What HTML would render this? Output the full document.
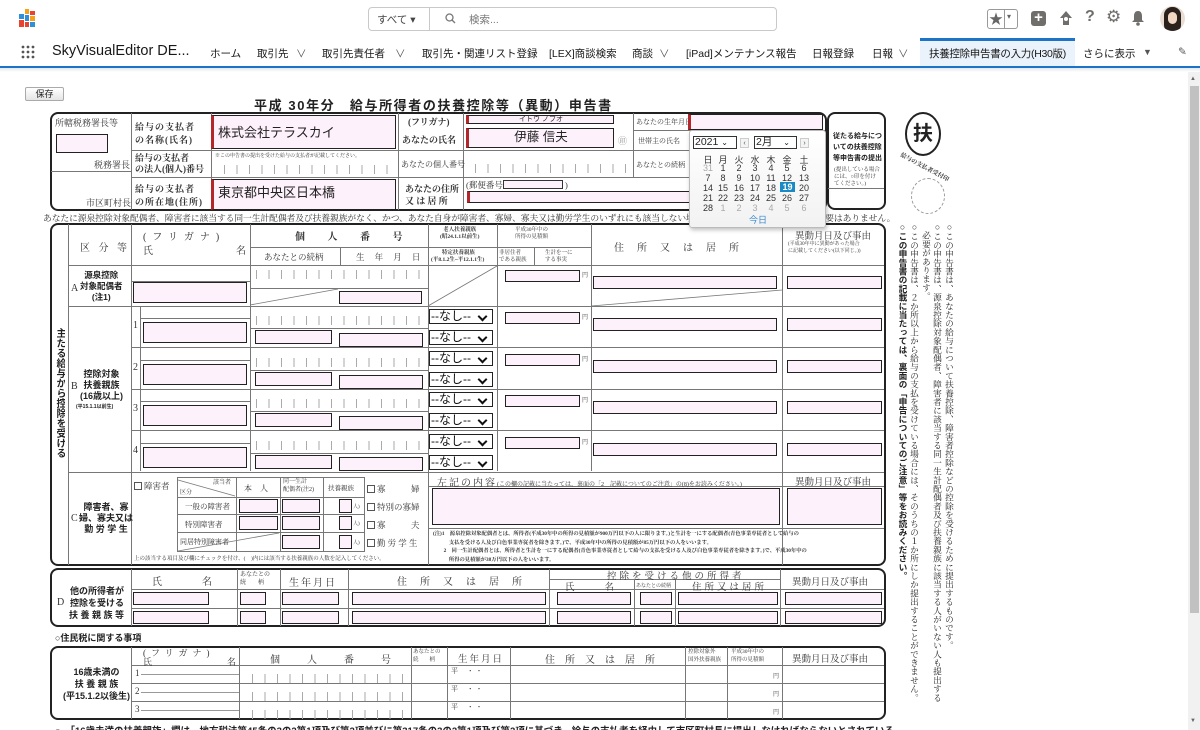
<!DOCTYPE html>
<html><head><meta charset="utf-8">
<style>
*{box-sizing:border-box}
html{overflow:hidden;height:730px}
body{margin:0;width:1200px;height:730px;overflow:hidden;position:relative;background:#fff;font-family:"Liberation Sans","Noto Sans CJK JP",sans-serif;color:#222}
.a{position:absolute;white-space:nowrap}
.h{position:absolute;height:0;border-top:1px solid #777}
.v{position:absolute;width:0;border-left:1px solid #777}
.i{position:absolute;background:#fdf1fb;border:1px solid #222}
.r{border-left:3px solid #b3262a}
.box{position:absolute;border:2px solid #222;border-radius:8px}
.m{position:absolute;white-space:nowrap;font-family:"Liberation Serif","Noto Serif CJK SC",serif;font-size:9px;color:#333}
.bd{position:absolute;white-space:nowrap;font-family:"Liberation Sans","Noto Sans CJK JP",sans-serif;font-size:9px;font-weight:bold;color:#222}
.tk{position:absolute;height:9px;background:repeating-linear-gradient(90deg,#aaa 0 1px,transparent 1px 12.5px)}
.s{position:absolute;width:64px;height:15px;border:1px solid #222;background:#fff;font-size:12px;line-height:13px;padding-left:1px;color:#111}
.s:after{content:"";position:absolute;right:6px;top:3px;width:5px;height:5px;border-right:2px solid #111;border-bottom:2px solid #111;transform:rotate(45deg)}
.vt{position:absolute;writing-mode:vertical-rl;font-family:"Liberation Serif","Noto Serif CJK SC",serif;font-size:8.7px;line-height:11.5px;white-space:nowrap;color:#222;overflow:hidden;max-height:500px}
.nv{position:absolute;top:46px;font-size:10.5px;color:#181818;white-space:nowrap}
.cb{display:inline-block;width:8px;height:8px;border:1px solid #555;vertical-align:-1px;margin-right:2px}
.cd{position:absolute;font-size:9px;width:14px;text-align:center;color:#333}
</style></head><body>

<!-- top header -->
<svg class="a" style="left:18px;top:9px" width="19" height="19" viewBox="0 0 19 19">
<rect x="7" y="0" width="4" height="5" fill="#f4a21c"/><rect x="12" y="2" width="5" height="4" fill="#e8432f"/>
<rect x="1" y="5" width="5" height="5" fill="#2f8fd8"/><rect x="7" y="6" width="4" height="6" fill="#2f8fd8"/>
<rect x="12" y="7" width="5" height="5" fill="#f4a21c"/><rect x="1" y="11" width="5" height="7" fill="#e8432f"/>
<rect x="7" y="13" width="4" height="5" fill="#e8432f"/><rect x="12" y="13" width="5" height="5" fill="#2f8fd8"/>
</svg>
<div class="a" style="left:368px;top:7px;width:409px;height:24px;border:1px solid #c9c9c9;border-radius:4px"></div>
<div class="v" style="left:429px;top:7px;height:24px;border-color:#c9c9c9"></div>
<div class="a" style="left:377px;top:12px;font-size:10.5px;color:#444">すべて ▾</div>
<svg class="a" style="left:445px;top:13px" width="11" height="11" viewBox="0 0 11 11"><circle cx="4.5" cy="4.5" r="3.5" stroke="#777" stroke-width="1.3" fill="none"/><path d="M7 7l3 3" stroke="#777" stroke-width="1.3"/></svg>
<div class="a" style="left:469px;top:12px;font-size:10.5px;color:#777">検索...</div>
<div class="a" style="left:987px;top:9px;width:31px;height:20px;border:1px solid #999;border-radius:3px"></div>
<div class="v" style="left:1004px;top:9px;height:20px;border-color:#999"></div>
<div class="a" style="left:989px;top:9px;font-size:14px;color:#666">★</div>
<div class="a" style="left:1007px;top:12px;font-size:8px;color:#666">▾</div>
<div class="a" style="left:1031px;top:11px;width:15px;height:15px;background:#706e6b;border-radius:3px;color:#fff;font-size:15px;line-height:14px;text-align:center;font-weight:bold">+</div>
<svg class="a" style="left:1057px;top:10px" width="18" height="17" viewBox="0 0 18 17"><path d="M9 1L3 8h3v7h6V8h3z" fill="#706e6b"/><circle cx="9" cy="9" r="2" fill="#fff"/></svg>
<div class="a" style="left:1085px;top:8px;font-size:16px;color:#706e6b;font-weight:bold">?</div>
<div class="a" style="left:1106px;top:7px;font-size:17px;color:#706e6b">⚙</div>
<svg class="a" style="left:1131px;top:10px" width="14" height="16" viewBox="0 0 14 16"><path d="M7 1C4 1 3 3.5 3 6v4l-2 2h12l-2-2V6c0-2.5-1-5-4-5z" fill="#706e6b"/><circle cx="7" cy="14" r="1.8" fill="#706e6b"/></svg>
<div class="a" style="left:1160px;top:6px;width:25px;height:25px;border-radius:50%;background:#e9dcd2;overflow:hidden"><div class="a" style="left:4px;top:1px;width:17px;height:26px;border-radius:8px;background:#2a211d"></div><div class="a" style="left:8px;top:6px;width:9px;height:12px;border-radius:5px;background:#f1d6c4"></div></div>

<!-- nav -->
<svg class="a" style="left:21px;top:45px" width="14" height="14" viewBox="0 0 14 14" fill="#555"><circle cx="2" cy="2" r="1.4"/><circle cx="7" cy="2" r="1.4"/><circle cx="12" cy="2" r="1.4"/><circle cx="2" cy="7" r="1.4"/><circle cx="7" cy="7" r="1.4"/><circle cx="12" cy="7" r="1.4"/><circle cx="2" cy="12" r="1.4"/><circle cx="7" cy="12" r="1.4"/><circle cx="12" cy="12" r="1.4"/></svg>
<div class="a" style="left:52px;top:43px;font-size:14.5px;color:#181818">SkyVisualEditor DE...</div>
<div class="a" style="left:920px;top:38px;width:155px;height:28px;background:#eaf2fb;border-top:3px solid #1b74c8"></div>
<div class="nv" style="left:210px">ホーム</div>
<div class="nv" style="left:257px">取引先</div><div class="nv" style="left:296px;color:#555">∨</div>
<div class="nv" style="left:322px">取引先責任者</div><div class="nv" style="left:395px;color:#555">∨</div>
<div class="nv" style="left:422px">取引先・関連リスト登録</div>
<div class="nv" style="left:549px">[LEX]商談検索</div>
<div class="nv" style="left:632px">商談</div><div class="nv" style="left:659px;color:#555">∨</div>
<div class="nv" style="left:686px">[iPad]メンテナンス報告</div>
<div class="nv" style="left:812px">日報登録</div>
<div class="nv" style="left:872px">日報</div><div class="nv" style="left:898px;color:#555">∨</div>
<div class="nv" style="left:929px;letter-spacing:-0.3px">扶養控除申告書の入力(H30版)</div>
<div class="nv" style="left:1083px">さらに表示</div><div class="nv" style="left:1143px;font-size:9px;top:47px;color:#555">▼</div>
<div class="nv" style="left:1178px;color:#555">✎</div>
<div class="a" style="left:0;top:66px;width:1200px;height:2px;background:#1b74c8"></div>
<div class="a" style="left:0;top:68px;width:1200px;height:4px;background:linear-gradient(#e4e8ee,#fff)"></div>

<!-- scrollbar -->
<div class="a" style="left:1188px;top:72px;width:12px;height:658px;background:#f1f1f1"></div>
<div class="a" style="left:1190px;top:86px;width:9px;height:527px;background:#c1c1c1"></div>
<div class="a" style="left:1190px;top:76px;font-size:6px;color:#666">▲</div>
<div class="a" style="left:1190px;top:718px;font-size:6px;color:#666">▼</div>

<!-- save button and title -->
<div class="a" style="left:25px;top:87px;width:39px;height:14px;border:1px solid #aaa;border-radius:2px;background:linear-gradient(#fff,#e5e5e5);font-size:9px;line-height:12px;text-align:center">保存</div>
<div class="a" style="left:254px;top:95px;font-size:13px;font-weight:bold;letter-spacing:1.6px">平成 30年分　給与所得者の扶養控除等（異動）申告書</div>

<!-- top box -->
<div class="box" style="left:50px;top:112px;width:777px;height:99px"></div>
<div class="v" style="left:131px;top:113px;height:97px"></div>
<div class="v" style="left:211px;top:113px;height:97px"></div>
<div class="v" style="left:398px;top:113px;height:97px"></div>
<div class="v" style="left:463px;top:113px;height:97px"></div>
<div class="v" style="left:633px;top:113px;height:64px"></div>
<div class="h" style="left:51px;top:171px;width:80px"></div>
<div class="h" style="left:131px;top:150px;width:694px"></div>
<div class="h" style="left:131px;top:177px;width:694px"></div>
<div class="h" style="left:633px;top:130px;width:192px"></div>
<div class="m" style="left:55px;top:116px">所轄税務署長等</div>
<div class="i" style="left:56px;top:134px;width:52px;height:19px"></div>
<div class="m" style="left:94px;top:158px">税務署長</div>
<div class="m" style="left:86px;top:196px">市区町村長</div>
<div class="m" style="left:135px;top:120px;font-weight:bold;letter-spacing:1px">給与の支払者<br>の名称(氏名)</div>
<div class="m" style="left:135px;top:153px;font-weight:bold;line-height:11px">給与の支払者<br>の法人(個人)番号</div>
<div class="m" style="left:135px;top:182px;font-weight:bold;letter-spacing:1px">給与の支払者<br>の所在地(住所)</div>
<div class="i r" style="left:211px;top:115px;width:185px;height:34px;font-size:13px;padding:6px 0 0 4px;font-family:'Liberation Sans','Noto Sans CJK JP',sans-serif">株式会社テラスカイ</div>
<div class="m" style="left:215px;top:152px;font-size:5px">※この申告書の提出を受けた給与の支払者が記載してください。</div>
<div class="tk" style="left:224px;top:165px;width:170px"></div>
<div class="i r" style="left:211px;top:179px;width:185px;height:31px;font-size:13px;padding:2px 0 0 4px;font-family:'Liberation Sans','Noto Sans CJK JP',sans-serif">東京都中央区日本橋</div>
<div class="m" style="left:408px;top:115px;font-weight:bold">(フリガナ)</div>
<div class="m" style="left:402px;top:133px;font-weight:bold">あなたの氏名</div>
<div class="m" style="left:401px;top:159px;font-size:8px">あなたの個人番号</div>
<div class="m" style="left:405px;top:183px;font-weight:bold;line-height:12px">あなたの住所<br>又 は 居 所</div>
<div class="i r" style="left:466px;top:115px;width:148px;height:9px;font-size:7px;line-height:7px;text-align:center">イトウ ノブオ</div>
<div class="i r" style="left:466px;top:128px;width:148px;height:20px;font-size:12.5px;text-align:center;line-height:17px">伊藤 信夫</div>
<div class="m" style="left:618px;top:134px;color:#999">㊞</div>
<div class="tk" style="left:475px;top:164px;width:155px"></div>
<div class="m" style="left:466px;top:179px;font-size:8.5px">(郵便番号<span style="display:inline-block;width:60px;height:9px;border:1px solid #333;background:#fdf1fb;vertical-align:-1px"></span> )</div>
<div class="i r" style="left:467px;top:191px;width:300px;height:12px"></div>
<div class="m" style="left:636px;top:117px;font-size:7px">あなたの生年月日</div>
<div class="m" style="left:638px;top:136px;font-size:7px">世帯主の氏名</div>
<div class="m" style="left:636px;top:160px;font-size:7px">あなたとの続柄</div>

<!-- side box -->
<div class="box" style="left:827px;top:112px;width:59px;height:98px"></div>
<div class="bd" style="left:833px;top:131px;font-size:7px;line-height:11px">従たる給与につ<br>いての扶養控除<br>等申告書の提出</div>
<div class="m" style="left:834px;top:167px;font-size:5.5px;line-height:7px">(提出している場合<br>には、○印を付け<br>てください。)</div>
<div class="h" style="left:828px;top:188px;width:56px"></div>

<!-- 扶 seal -->
<div class="a" style="left:905px;top:112px;width:36px;height:44px;border:2px solid #222;border-radius:50%;font-size:20px;font-weight:bold;text-align:center;line-height:40px">扶</div>
<div class="a" style="left:911px;top:178px;width:34px;height:36px;border:1px dashed #999;border-radius:50%"></div>
<div class="m" style="left:898px;top:162px;font-size:6px;font-weight:bold;transform:rotate(28deg)">給与の支払者受付印</div>

<!-- line text -->
<div class="m" style="left:43px;top:211px;font-size:8.8px;letter-spacing:-0.1px">あなたに源泉控除対象配偶者、障害者に該当する同一生計配偶者及び扶養親族がなく、かつ、あなた自身が障害者、寡婦、寡夫又は勤労学生のいずれにも該当しない場合には、以下の各欄に記入する必要はありません。</div>

<!-- main box -->
<div class="box" style="left:50px;top:223px;width:836px;height:343px"></div>
<div class="v" style="left:68px;top:224px;height:341px"></div>
<div class="v" style="left:131px;top:224px;height:341px"></div>
<div class="v" style="left:250px;top:224px;height:247px"></div>
<div class="v" style="left:428px;top:224px;height:341px"></div>
<div class="v" style="left:497px;top:224px;height:247px"></div>
<div class="v" style="left:591px;top:224px;height:247px"></div>
<div class="v" style="left:782px;top:224px;height:341px"></div>
<div class="v" style="left:340px;top:247px;height:18px"></div>
<div class="v" style="left:534px;top:247px;height:18px"></div>
<div class="v" style="left:140px;top:306px;height:165px"></div>
<div class="h" style="left:250px;top:247px;width:341px"></div>
<div class="h" style="left:68px;top:265px;width:816px"></div>
<div class="h" style="left:68px;top:306px;width:816px"></div>
<div class="h" style="left:131px;top:347px;width:753px"></div>
<div class="h" style="left:131px;top:389px;width:753px"></div>
<div class="h" style="left:131px;top:430px;width:753px"></div>
<div class="h" style="left:68px;top:472px;width:816px"></div>
<div class="h" style="left:428px;top:486px;width:456px"></div>
<div class="h" style="left:428px;top:528px;width:456px"></div>

<div class="m" style="left:80px;top:239px;font-size:10px;letter-spacing:3px">区 分 等</div>
<div class="m" style="left:143px;top:228px;font-size:10px;letter-spacing:6px">(フリガナ)</div>
<div class="m" style="left:143px;top:242px;font-size:10px">氏</div><div class="m" style="left:236px;top:242px;font-size:10px">名</div>
<div class="m" style="left:295px;top:228px;font-size:10px;font-weight:bold;letter-spacing:10px">個 人 番 号</div>
<div class="m" style="left:264px;top:251px;font-size:8.5px">あなたとの続柄</div>
<div class="m" style="left:356px;top:251px;font-size:8.5px;letter-spacing:4px">生 年 月 日</div>
<div class="m" style="left:440px;top:227px;font-size:5.5px;line-height:7px;text-align:center;font-weight:bold">老人扶養親族<br>(昭24.1.1以前生)</div>
<div class="m" style="left:431px;top:250px;font-size:5.5px;line-height:7px;text-align:center;font-weight:bold">&nbsp;特定扶養親族<br>(平8.1.2生~平12.1.1生)</div>
<div class="m" style="left:515px;top:227px;font-size:5.5px;line-height:7px;text-align:center">平成30年中の<br>所得の見積額</div>
<div class="m" style="left:499px;top:250px;font-size:5.5px;line-height:7px">非居住者<br>である親族</div>
<div class="m" style="left:545px;top:250px;font-size:5.5px;line-height:7px">生計を一に<br>する事実</div>
<div class="m" style="left:614px;top:239px;font-size:10px;letter-spacing:13px">住所又は居所</div>
<div class="m" style="left:795px;top:228px;font-size:9.5px">異動月日及び事由</div>
<div class="m" style="left:788px;top:241px;font-size:5px;line-height:7px">(平成30年中に異動があった場合<br>に記載してください(以下同じ。))</div>

<div class="vt" style="left:53px;top:328px;font-family:'Liberation Sans','Noto Sans CJK JP',sans-serif;font-weight:bold;font-size:10px;line-height:12px">主たる給与から控除を受ける</div>
<div class="m" style="left:71px;top:283px;font-size:10px">A</div>
<div class="bd" style="left:80px;top:270px;font-size:8.5px;line-height:11px;text-align:center">源泉控除<br>対象配偶者<br>(注1)</div>
<div class="m" style="left:71px;top:381px;font-size:10px">B</div>
<div class="bd" style="left:80px;top:369px;font-size:9px;line-height:11px;text-align:center">控除対象<br>扶養親族<br>(16歳以上)</div>
<div class="bd" style="left:76px;top:403px;font-size:5px">(平15.1.1以前生)</div>
<div class="m" style="left:71px;top:513px;font-size:10px">C</div>
<div class="bd" style="left:79px;top:502px;font-size:9px;line-height:11px;text-align:center">障害者、寡<br>婦、寡夫又は<br>勤 労 学 生</div>

<!-- A row -->
<div class="h" style="left:131px;top:281px;width:119px"></div>
<div class="i" style="left:133px;top:282px;width:114px;height:21px"></div>
<div class="tk" style="left:256px;top:270px;width:165px"></div>
<div class="h" style="left:250px;top:288px;width:178px"></div>
<div class="i" style="left:339px;top:291px;width:83px;height:13px"></div>
<div class="i" style="left:505px;top:270px;width:75px;height:12px"></div><div class="m" style="left:582px;top:270px;font-size:6px">円</div>
<div class="i" style="left:593px;top:276px;width:184px;height:13px"></div>
<div class="i" style="left:787px;top:276px;width:95px;height:13px"></div>

<!-- B rows -->
<div class="m" style="left:133px;top:320px;font-size:10px">1</div>
<div class="m" style="left:133px;top:362px;font-size:10px">2</div>
<div class="m" style="left:133px;top:403px;font-size:10px">3</div>
<div class="m" style="left:133px;top:445px;font-size:10px">4</div>

<div class="h" style="left:140px;top:318px;width:110px"></div>
<div class="i" style="left:143px;top:322px;width:104px;height:21px"></div>
<div class="tk" style="left:256px;top:316px;width:165px"></div>
<div class="h" style="left:250px;top:328px;width:178px"></div>
<div class="i" style="left:255px;top:330px;width:77px;height:14px"></div>
<div class="i" style="left:339px;top:333px;width:84px;height:14px"></div>
<div class="s" style="left:429px;top:309px">--なし--</div>
<div class="s" style="left:429px;top:330px">--なし--</div>
<div class="i" style="left:505px;top:312px;width:75px;height:12px"></div><div class="m" style="left:582px;top:312px;font-size:6px">円</div>
<div class="i" style="left:593px;top:318px;width:184px;height:13px"></div>
<div class="i" style="left:787px;top:318px;width:95px;height:13px"></div>

<div class="h" style="left:140px;top:360px;width:110px"></div>
<div class="i" style="left:143px;top:364px;width:104px;height:21px"></div>
<div class="tk" style="left:256px;top:358px;width:165px"></div>
<div class="h" style="left:250px;top:370px;width:178px"></div>
<div class="i" style="left:255px;top:372px;width:77px;height:14px"></div>
<div class="i" style="left:339px;top:375px;width:84px;height:14px"></div>
<div class="s" style="left:429px;top:351px">--なし--</div>
<div class="s" style="left:429px;top:372px">--なし--</div>
<div class="i" style="left:505px;top:354px;width:75px;height:12px"></div><div class="m" style="left:582px;top:354px;font-size:6px">円</div>
<div class="i" style="left:593px;top:360px;width:184px;height:13px"></div>
<div class="i" style="left:787px;top:360px;width:95px;height:13px"></div>

<div class="h" style="left:140px;top:401px;width:110px"></div>
<div class="i" style="left:143px;top:405px;width:104px;height:21px"></div>
<div class="tk" style="left:256px;top:399px;width:165px"></div>
<div class="h" style="left:250px;top:411px;width:178px"></div>
<div class="i" style="left:255px;top:413px;width:77px;height:14px"></div>
<div class="i" style="left:339px;top:416px;width:84px;height:14px"></div>
<div class="s" style="left:429px;top:392px">--なし--</div>
<div class="s" style="left:429px;top:413px">--なし--</div>
<div class="i" style="left:505px;top:395px;width:75px;height:12px"></div><div class="m" style="left:582px;top:395px;font-size:6px">円</div>
<div class="i" style="left:593px;top:401px;width:184px;height:13px"></div>
<div class="i" style="left:787px;top:401px;width:95px;height:13px"></div>

<div class="h" style="left:140px;top:443px;width:110px"></div>
<div class="i" style="left:143px;top:447px;width:104px;height:21px"></div>
<div class="tk" style="left:256px;top:441px;width:165px"></div>
<div class="h" style="left:250px;top:453px;width:178px"></div>
<div class="i" style="left:255px;top:455px;width:77px;height:14px"></div>
<div class="i" style="left:339px;top:457px;width:84px;height:14px"></div>
<div class="s" style="left:429px;top:434px">--なし--</div>
<div class="s" style="left:429px;top:455px">--なし--</div>
<div class="i" style="left:505px;top:437px;width:75px;height:12px"></div><div class="m" style="left:582px;top:437px;font-size:6px">円</div>
<div class="i" style="left:593px;top:443px;width:184px;height:13px"></div>
<div class="i" style="left:787px;top:443px;width:95px;height:13px"></div>

<svg class="a" style="left:0;top:0" width="1200" height="730">
<g stroke="#777" stroke-width="0.8">
<line x1="250" y1="305" x2="338" y2="289"/><line x1="428" y1="306" x2="497" y2="266"/><line x1="591" y1="306" x2="782" y2="290"/>
<line x1="178" y1="551" x2="279" y2="533"/>
<line x1="178" y1="480" x2="235" y2="496"/>
</g></svg>

<!-- C section -->
<div class="m" style="left:134px;top:480px;font-size:8.5px"><span class="cb"></span>障害者</div>
<div class="a" style="left:177px;top:477px;width:188px;height:75px;border:1px solid #777"></div>
<div class="v" style="left:236px;top:477px;height:75px"></div>
<div class="v" style="left:280px;top:477px;height:75px"></div>
<div class="v" style="left:323px;top:477px;height:75px"></div>
<div class="h" style="left:177px;top:497px;width:188px"></div>
<div class="h" style="left:177px;top:514px;width:188px"></div>
<div class="h" style="left:177px;top:532px;width:188px"></div>
<div class="m" style="left:213px;top:477px;font-size:6px">該当者</div><div class="m" style="left:180px;top:487px;font-size:6px">区分</div>
<div class="m" style="left:244px;top:483px;font-size:8px">本　人</div>
<div class="m" style="left:283px;top:478px;font-size:6px;line-height:8px">同一生計<br>配偶者(注2)</div>
<div class="m" style="left:328px;top:483px;font-size:6.5px">扶養親族</div>
<div class="m" style="left:185px;top:501px;font-size:7.5px">一般の障害者</div>
<div class="m" style="left:185px;top:519px;font-size:7.5px">特別障害者</div>
<div class="m" style="left:180px;top:537px;font-size:7px">同居特別障害者</div>
<div class="i" style="left:239px;top:499px;width:39px;height:14px"></div>
<div class="i" style="left:282px;top:499px;width:38px;height:14px"></div>
<div class="i" style="left:339px;top:499px;width:13px;height:14px"></div><div class="m" style="left:353px;top:503px;font-size:5px">人)</div>
<div class="i" style="left:239px;top:516px;width:39px;height:14px"></div>
<div class="i" style="left:282px;top:516px;width:38px;height:14px"></div>
<div class="i" style="left:339px;top:516px;width:13px;height:14px"></div><div class="m" style="left:353px;top:520px;font-size:5px">人)</div>
<div class="i" style="left:282px;top:535px;width:38px;height:14px"></div>
<div class="i" style="left:339px;top:535px;width:13px;height:14px"></div><div class="m" style="left:353px;top:539px;font-size:5px">人)</div>
<div class="m" style="left:367px;top:483px;font-size:8.5px"><span class="cb"></span>寡　　　婦</div>
<div class="m" style="left:367px;top:501px;font-size:8.5px"><span class="cb"></span>特別の寡婦</div>
<div class="m" style="left:367px;top:519px;font-size:8.5px"><span class="cb"></span>寡　　　夫</div>
<div class="m" style="left:367px;top:537px;font-size:8.5px"><span class="cb"></span>勤 労 学 生</div>
<div class="m" style="left:134px;top:554px;font-size:5.5px">上の該当する項目及び欄にチェックを付け、(　)内には該当する扶養親族の人数を記入してください。</div>
<div class="m" style="left:437px;top:474px;font-size:10px;letter-spacing:2px">左記の内容<span style="font-size:6px;letter-spacing:0">(この欄の記載に当たっては、裏面の「2　記載についてのご注意」の(8)をお読みください。)</span></div>
<div class="i" style="left:432px;top:488px;width:348px;height:37px"></div>
<div class="m" style="left:795px;top:474px;font-size:9.5px">異動月日及び事由</div>
<div class="i" style="left:787px;top:488px;width:95px;height:37px"></div>
<div class="m" style="left:433px;top:530px;font-size:5.3px;line-height:8.5px;font-weight:bold">(注)1　源泉控除対象配偶者とは、所得者(平成30年中の所得の見積額が900万円以下の人に限ります。)と生計を一にする配偶者(青色事業専従者として給与の<br>　　　支払を受ける人及び白色事業専従者を除きます。)で、平成30年中の所得の見積額が85万円以下の人をいいます。<br>　　2　同一生計配偶者とは、所得者と生計を一にする配偶者(青色事業専従者として給与の支払を受ける人及び白色事業専従者を除きます。)で、平成30年中の<br>　　　所得の見積額が38万円以下の人をいいます。</div>

<!-- D box -->
<div class="box" style="left:50px;top:568px;width:836px;height:59px"></div>
<div class="v" style="left:131px;top:569px;height:57px"></div>
<div class="v" style="left:237px;top:569px;height:57px"></div>
<div class="v" style="left:280px;top:569px;height:57px"></div>
<div class="v" style="left:348px;top:569px;height:57px"></div>
<div class="v" style="left:549px;top:569px;height:57px"></div>
<div class="v" style="left:634px;top:579px;height:47px"></div>
<div class="v" style="left:675px;top:579px;height:47px"></div>
<div class="v" style="left:780px;top:569px;height:57px"></div>
<div class="h" style="left:549px;top:579px;width:231px"></div>
<div class="h" style="left:131px;top:589px;width:753px"></div>
<div class="h" style="left:131px;top:608px;width:753px"></div>
<div class="m" style="left:57px;top:597px;font-size:10px">D</div>
<div class="bd" style="left:69px;top:585px;font-size:9px;line-height:12px;text-align:right">他の所得者が<br>控除を受ける<br>扶 養 親 族 等</div>
<div class="m" style="left:152px;top:573px;font-size:10px;letter-spacing:40px">氏名</div>
<div class="m" style="left:240px;top:571px;font-size:6px;line-height:8px">あなたとの<br>続　　柄</div>
<div class="m" style="left:289px;top:574px;font-size:10px;letter-spacing:2px">生年月日</div>
<div class="m" style="left:397px;top:573px;font-size:10px;letter-spacing:13px">住所又は居所</div>
<div class="m" style="left:607px;top:568px;font-size:9.5px;letter-spacing:3px">控除を受ける他の所得者</div>
<div class="m" style="left:565px;top:579px;font-size:9.5px;letter-spacing:30px">氏名</div>
<div class="m" style="left:636px;top:582px;font-size:5px">あなたとの続柄</div>
<div class="m" style="left:692px;top:579px;font-size:9.5px;letter-spacing:3px">住所又は居所</div>
<div class="m" style="left:792px;top:574px;font-size:9.5px">異動月日及び事由</div>
<div class="i" style="left:133px;top:592px;width:76px;height:13px"></div>
<div class="i" style="left:240px;top:592px;width:26px;height:13px"></div>
<div class="i" style="left:282px;top:592px;width:57px;height:13px"></div>
<div class="i" style="left:352px;top:592px;width:194px;height:13px"></div>
<div class="i" style="left:557px;top:592px;width:74px;height:13px"></div>
<div class="i" style="left:640px;top:592px;width:32px;height:13px"></div>
<div class="i" style="left:678px;top:592px;width:100px;height:13px"></div>
<div class="i" style="left:785px;top:592px;width:97px;height:13px"></div>
<div class="i" style="left:133px;top:611px;width:76px;height:13px"></div>
<div class="i" style="left:240px;top:611px;width:26px;height:13px"></div>
<div class="i" style="left:282px;top:611px;width:57px;height:13px"></div>
<div class="i" style="left:352px;top:611px;width:194px;height:13px"></div>
<div class="i" style="left:557px;top:611px;width:74px;height:13px"></div>
<div class="i" style="left:640px;top:611px;width:32px;height:13px"></div>
<div class="i" style="left:678px;top:611px;width:100px;height:13px"></div>
<div class="i" style="left:785px;top:611px;width:97px;height:13px"></div>

<div class="bd" style="left:55px;top:631px;font-size:9px">○住民税に関する事項</div>

<!-- bottom box -->
<div class="box" style="left:50px;top:646px;width:836px;height:74px"></div>
<div class="v" style="left:131px;top:647px;height:72px"></div>
<div class="v" style="left:239px;top:647px;height:72px"></div>
<div class="v" style="left:411px;top:647px;height:72px"></div>
<div class="v" style="left:447px;top:647px;height:72px"></div>
<div class="v" style="left:510px;top:647px;height:72px"></div>
<div class="v" style="left:685px;top:647px;height:72px"></div>
<div class="v" style="left:727px;top:647px;height:72px"></div>
<div class="v" style="left:782px;top:647px;height:72px"></div>
<div class="h" style="left:131px;top:665px;width:753px"></div>
<div class="h" style="left:131px;top:683px;width:753px"></div>
<div class="h" style="left:131px;top:701px;width:753px"></div>
<div class="bd" style="left:63px;top:666px;font-size:9px;line-height:12px;text-align:center">16歳未満の<br>扶 養 親 族<br>(平15.1.2以後生)</div>
<div class="m" style="left:143px;top:646px;font-size:9px;letter-spacing:5px">(フリガナ)</div>
<div class="m" style="left:143px;top:655px;font-size:9px">氏</div><div class="m" style="left:227px;top:655px;font-size:9px">名</div>
<div class="m" style="left:270px;top:651px;font-size:10px;letter-spacing:27px">個人番号</div>
<div class="m" style="left:413px;top:648px;font-size:5.5px;line-height:8px">あなたとの<br>続　　柄</div>
<div class="m" style="left:458px;top:651px;font-size:9.5px;letter-spacing:2px">生年月日</div>
<div class="m" style="left:545px;top:651px;font-size:10px;letter-spacing:10px">住所又は居所</div>
<div class="m" style="left:688px;top:648px;font-size:5.5px;line-height:8px">控除対象外<br>国外扶養親族</div>
<div class="m" style="left:731px;top:648px;font-size:5.5px;line-height:8px">平成30年中の<br>所得の見積額</div>
<div class="m" style="left:792px;top:651px;font-size:9.5px">異動月日及び事由</div>
<div class="m" style="left:135px;top:668px;font-size:9px">1</div><div class="h" style="left:141px;top:674px;width:98px;border-color:#999"></div>
<div class="m" style="left:135px;top:686px;font-size:9px">2</div><div class="h" style="left:141px;top:692px;width:98px;border-color:#999"></div>
<div class="m" style="left:135px;top:704px;font-size:9px">3</div><div class="h" style="left:141px;top:710px;width:98px;border-color:#999"></div>
<div class="tk" style="left:252px;top:674px;width:155px"></div>
<div class="tk" style="left:252px;top:692px;width:155px"></div>
<div class="tk" style="left:252px;top:710px;width:155px"></div>
<div class="m" style="left:451px;top:666px;font-size:7px">平　 ・ ・</div>
<div class="m" style="left:451px;top:684px;font-size:7px">平　 ・ ・</div>
<div class="m" style="left:451px;top:702px;font-size:7px">平　 ・ ・</div>
<div class="m" style="left:773px;top:671px;font-size:6px">円</div>
<div class="m" style="left:773px;top:689px;font-size:6px">円</div>
<div class="m" style="left:773px;top:707px;font-size:6px">円</div>
<div class="bd" style="left:55px;top:723px;font-size:9.5px">○　「16歳未満の扶養親族」欄は、地方税法第45条の3の2第1項及び第2項並びに第317条の3の2第1項及び第2項に基づき、給与の支払者を経由して市区町村長に提出しなければならないとされている</div>

<!-- vertical notes -->
<div class="vt" style="left:943px;top:222px">○この申告書は、あなたの給与について扶養控除、障害者控除などの控除を受けるために提出するものです。</div>
<div class="vt" style="left:931px;top:222px">○この申告書は、源泉控除対象配偶者、障害者に該当する同一生計配偶者及び扶養親族に該当する人がいない人も提出する</div>
<div class="vt" style="left:920px;top:231px">必要があります。</div>
<div class="vt" style="left:908px;top:222px">○この申告書は、２か所以上から給与の支払を受けている場合には、そのうちの１か所にしか提出することができません。</div>
<div class="vt" style="left:896px;top:222px;font-family:'Liberation Sans','Noto Sans CJK JP',sans-serif;font-weight:bold">○この申告書の記載に当たっては、裏面の「申告についてのご注意」等をお読みください。</div>

<!-- date input + calendar -->
<div class="i r" style="left:688px;top:114px;width:135px;height:16px"></div>
<div class="a" style="left:689px;top:130px;width:137px;height:98px;background:linear-gradient(#fff,#f2f2f2);border:1px solid #bbb;border-radius:3px;box-shadow:1px 2px 4px rgba(0,0,0,.25)"></div>
<div class="a" style="left:693px;top:136px;width:44px;height:13px;border:1px solid #333;background:#fff;font-size:10.5px;line-height:11px;padding-left:1px">2021 <span style="font-size:8px">⌄</span></div>
<div class="a" style="left:740px;top:138px;width:9px;height:10px;border:1px solid #ccc;background:#f4f4f4;font-size:7px;line-height:9px;text-align:center;color:#555">‹</div>
<div class="a" style="left:754px;top:136px;width:43px;height:13px;border:1px solid #333;background:#fff;font-size:10.5px;line-height:11px;padding-left:1px">2月 <span style="font-size:8px;margin-left:8px">⌄</span></div>
<div class="a" style="left:800px;top:138px;width:9px;height:10px;border:1px solid #ccc;background:#f4f4f4;font-size:7px;line-height:9px;text-align:center;color:#555">›</div>
<div class="cd" style="left:701px;top:153px">日</div><div class="cd" style="left:716px;top:153px">月</div><div class="cd" style="left:732px;top:153px">火</div><div class="cd" style="left:748px;top:153px">水</div><div class="cd" style="left:764px;top:153px">木</div><div class="cd" style="left:780px;top:153px">金</div><div class="cd" style="left:797px;top:153px">土</div>
<div class="cd" style="left:701px;top:163px;color:#aaa">31</div><div class="cd" style="left:716px;top:163px">1</div><div class="cd" style="left:732px;top:163px">2</div><div class="cd" style="left:748px;top:163px">3</div><div class="cd" style="left:764px;top:163px">4</div><div class="cd" style="left:780px;top:163px">5</div><div class="cd" style="left:797px;top:163px">6</div>
<div class="cd" style="left:701px;top:173px">7</div><div class="cd" style="left:716px;top:173px">8</div><div class="cd" style="left:732px;top:173px">9</div><div class="cd" style="left:748px;top:173px">10</div><div class="cd" style="left:764px;top:173px">11</div><div class="cd" style="left:780px;top:173px">12</div><div class="cd" style="left:797px;top:173px">13</div>
<div class="cd" style="left:701px;top:183px">14</div><div class="cd" style="left:716px;top:183px">15</div><div class="cd" style="left:732px;top:183px">16</div><div class="cd" style="left:748px;top:183px">17</div><div class="cd" style="left:764px;top:183px">18</div><div class="cd" style="left:780px;top:182px;width:15px;height:10px;line-height:10px;background:#1a8ac6;color:#fff;font-weight:bold">19</div><div class="cd" style="left:797px;top:183px">20</div>
<div class="cd" style="left:701px;top:193px">21</div><div class="cd" style="left:716px;top:193px">22</div><div class="cd" style="left:732px;top:193px">23</div><div class="cd" style="left:748px;top:193px">24</div><div class="cd" style="left:764px;top:193px">25</div><div class="cd" style="left:780px;top:193px">26</div><div class="cd" style="left:797px;top:193px">27</div>
<div class="cd" style="left:701px;top:203px">28</div><div class="cd" style="left:716px;top:203px;color:#aaa">1</div><div class="cd" style="left:732px;top:203px;color:#aaa">2</div><div class="cd" style="left:748px;top:203px;color:#aaa">3</div><div class="cd" style="left:764px;top:203px;color:#aaa">4</div><div class="cd" style="left:780px;top:203px;color:#aaa">5</div><div class="cd" style="left:797px;top:203px;color:#aaa">6</div>
<div class="a" style="left:749px;top:213px;font-size:9px;color:#3a8ad0">今日</div>

</body></html>
